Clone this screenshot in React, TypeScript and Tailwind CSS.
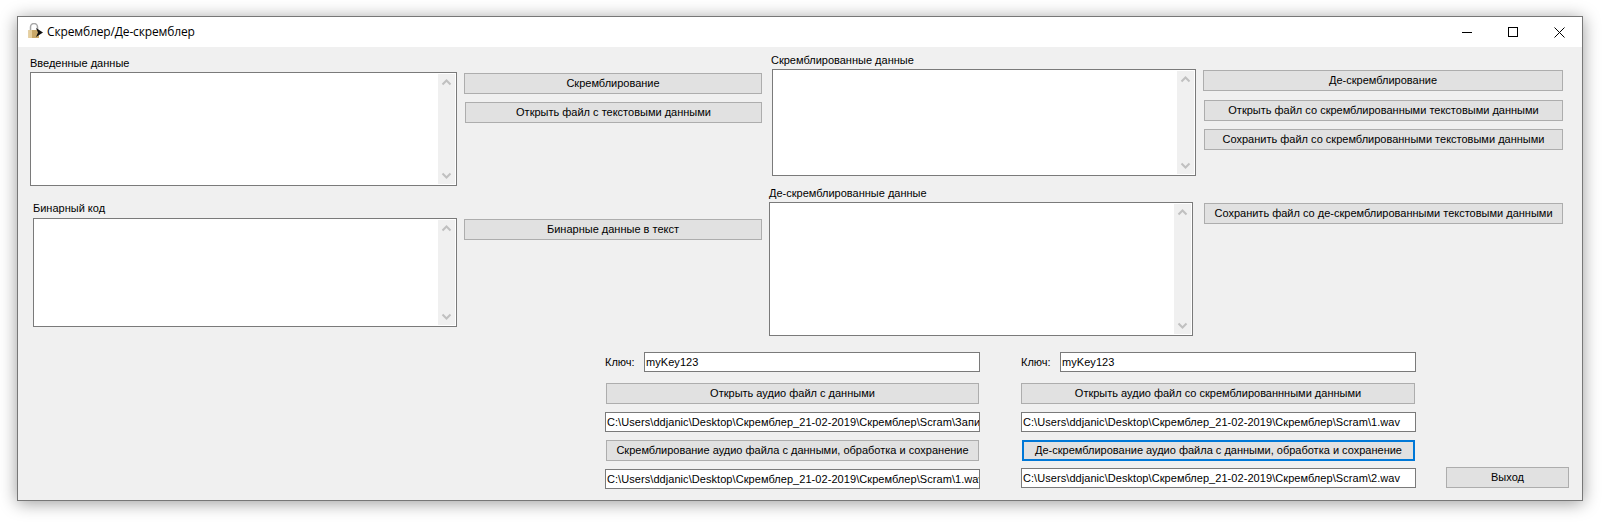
const font = 'font-["Liberation_Sans",Arial,sans-serif]';

function Chevron({ up }: { up?: boolean }) {
  return (
    <svg width="17" height="17" viewBox="0 0 17 17" fill="none">
      <path
        d={up ? 'M4.5 10.5 L8.5 6.5 L12.5 10.5' : 'M4.5 6.5 L8.5 10.5 L12.5 6.5'}
        stroke="#c0c0c0"
        strokeWidth="2"
      />
    </svg>
  );
}

function TextBox({ className }: { className: string }) {
  return (
    <div className={`flex border border-[#7a7a7a] bg-white ${className}`}>
      <textarea className="min-w-0 flex-1 resize-none outline-none" />
      <div className="my-px mr-px flex w-[17px] flex-col justify-between bg-[#f0f0f0]">
        <Chevron up />
        <Chevron />
      </div>
    </div>
  );
}

function Label({ text, className = '' }: { text: string; className?: string }) {
  return <div className={`h-4 text-[11px] leading-4 text-black ${className}`}>{text}</div>;
}

function Btn({
  text,
  className = '',
  focused,
}: {
  text: string;
  className?: string;
  focused?: boolean;
}) {
  return (
    <button
      className={`flex h-[21px] items-center justify-center bg-[#e1e1e1] text-[11px] text-black ${
        focused ? 'border-2 border-[#0078d7]' : 'border border-[#adadad]'
      } ${className}`}>
      {text}
    </button>
  );
}

function Field({ value, className = '' }: { value: string; className?: string }) {
  return (
    <input
      readOnly
      defaultValue={value}
      className={`block h-5 border border-[#7a7a7a] bg-white pl-px text-[11px] tracking-[0.06px] text-black outline-none ${className}`}
    />
  );
}

function AppIcon() {
  return (
    <svg width="16" height="16" viewBox="0 0 16 16" fill="none" className="-mt-0.5 shrink-0">
      <path d="M2.5 7 V4 a3.5 3.5 0 0 1 7 0 V7" stroke="#a8a8a8" strokeWidth="1.5" />
      <rect x="0.5" y="7" width="10.5" height="8" rx="0.5" fill="#c9a868" />
      <rect x="0.5" y="7" width="3.5" height="8" fill="#e6cf9e" />
      <path d="M8 5 L15 9.5 L8 14 L10 9.5 Z" fill="#111111" />
    </svg>
  );
}

function WindowControls() {
  return (
    <div className="flex h-full">
      <div className="flex w-[46px] items-center justify-center">
        <div className="h-px w-2.5 bg-black" />
      </div>
      <div className="flex w-[46px] items-center justify-center">
        <div className="size-2.5 border border-black" />
      </div>
      <div className="flex w-[46px] items-center justify-center">
        <svg width="11" height="11" viewBox="0 0 11 11" fill="none">
          <path d="M0.5 0.5 L10.5 10.5 M10.5 0.5 L0.5 10.5" stroke="#000" />
        </svg>
      </div>
    </div>
  );
}

export default function App() {
  return (
    <div className={`h-[523px] w-[1604px] overflow-hidden bg-white pt-4 pl-[17px] ${font}`}>
      <div className="flex h-[485px] w-[1566px] flex-col border border-[#777777] bg-[#f0f0f0] shadow-[0_2px_16px_rgba(0,0,0,0.4)]">
        {/* title bar */}
        <div className="flex h-[30px] shrink-0 items-center justify-between bg-white">
          <div className="ml-2.5 flex items-center gap-[3px]">
            <AppIcon />
            <span className='font-["Open_Sans",sans-serif] text-xs tracking-[-0.14px] text-black'>
              Скремблер/Де-скремблер
            </span>
          </div>
          <WindowControls />
        </div>

        {/* upper part */}
        <div className="flex h-[305px] shrink-0 pl-3">
          <div className="w-[427px] pt-2">
            <Label text="Введенные данные" />
            <TextBox className="mt-px h-[114px] w-[427px]" />
            <Label text="Бинарный код" className="mt-3.5 ml-[3px]" />
            <TextBox className="mt-0.5 ml-[3px] h-[109px] w-[424px]" />
          </div>

          <div className="ml-[7px] flex w-[298px] flex-col pt-[26px]">
            <Btn text="Скремблирование" className="w-[298px]" />
            <Btn text="Открыть файл с текстовыми данными" className="mt-2 ml-px w-[297px]" />
            <Btn text="Бинарные данные в текст" className="mt-24 w-[298px]" />
          </div>

          <div className="ml-[7px] w-[427px] pt-[5px]">
            <Label text="Скремблированные данные" className="ml-0.5" />
            <TextBox className="mt-px ml-[3px] h-[107px] w-[424px]" />
            <Label text="Де-скремблированные данные" className="mt-[9px]" />
            <TextBox className="mt-px h-[134px] w-[424px]" />
          </div>

          <div className="ml-[7px] flex w-[360px] flex-col pt-[23px]">
            <Btn text="Де-скремблирование" className="w-[360px]" />
            <Btn
              text="Открыть файл со скремблированными текстовыми данными"
              className="mt-[9px] ml-px w-[359px]"
            />
            <Btn
              text="Сохранить файл со скремблированными текстовыми данными"
              className="mt-2 ml-px w-[359px]"
            />
            <Btn
              text="Сохранить файл со де-скремблированными текстовыми данными"
              className="mt-[53px] ml-px w-[359px]"
            />
          </div>
        </div>

        {/* audio part */}
        <div className="flex pl-[587px]">
          <div className="flex w-[375px] flex-col">
            <div className="flex h-5 items-center justify-between">
              <span className="text-[11px] text-black">Ключ:</span>
              <Field value="myKey123" className="w-[336px]" />
            </div>
            <Btn text="Открыть аудио файл с данными" className="mt-[11px] ml-px w-[373px]" />
            <Field
              value="C:\Users\ddjanic\Desktop\Скремблер_21-02-2019\Скремблер\Scram\Запись.wav"
              className="mt-2 w-[375px]"
            />
            <Btn
              text="Скремблирование аудио файла с данными, обработка и сохранение"
              className="mt-2 ml-px w-[373px]"
            />
            <Field
              value="C:\Users\ddjanic\Desktop\Скремблер_21-02-2019\Скремблер\Scram\1.wav"
              className="mt-2 w-[375px]"
            />
          </div>

          <div className="ml-[41px] flex w-[395px] flex-col">
            <div className="flex h-5 items-center justify-between">
              <span className="text-[11px] text-black">Ключ:</span>
              <Field value="myKey123" className="w-[356px]" />
            </div>
            <Btn
              text="Открыть аудио файл со скремблированнными данными"
              className="mt-[11px] w-[394px]"
            />
            <Field
              value="C:\Users\ddjanic\Desktop\Скремблер_21-02-2019\Скремблер\Scram\1.wav"
              className="mt-2 w-[395px]"
            />
            <Btn
              text="Де-скремблирование аудио файла с данными, обработка и сохранение"
              focused
              className="mt-2 ml-px w-[393px]"
            />
            <Field
              value="C:\Users\ddjanic\Desktop\Скремблер_21-02-2019\Скремблер\Scram\2.wav"
              className="mt-[7px] w-[395px]"
            />
          </div>

          <div className="ml-[30px] flex flex-col justify-end">
            <Btn text="Выход" className="mb-px w-[123px]" />
          </div>
        </div>
      </div>
    </div>
  );
}
